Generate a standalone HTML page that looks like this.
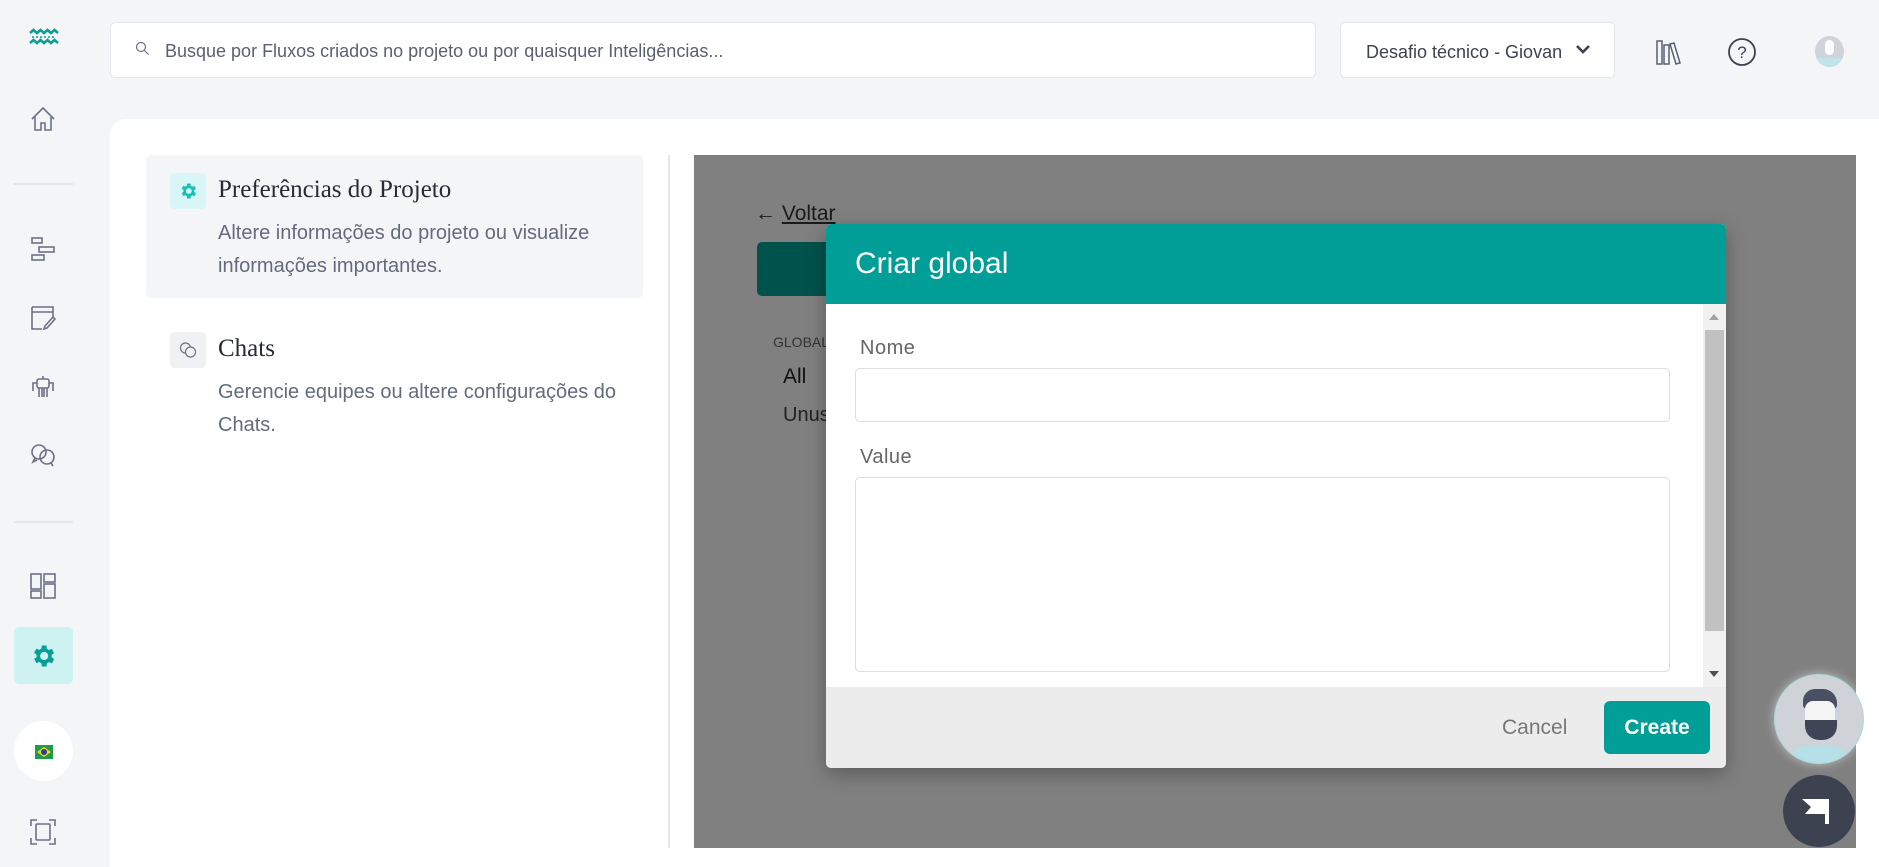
<!DOCTYPE html>
<html><head><meta charset="utf-8"><style>
*{box-sizing:border-box;margin:0;padding:0}
body{width:1879px;height:867px;overflow:hidden;background:#f4f5f7;font-family:"Liberation Sans",sans-serif;position:relative;color:#333}
.abs{position:absolute}
.ic{position:absolute;left:29px;width:28px;height:28px}
.ic svg{width:28px;height:28px;fill:none;stroke:#6b7285;stroke-width:1.6}
.sep{position:absolute;left:14px;width:59px;height:2px;background:#e3e6ea}
.lbl{font-family:"Liberation Sans",sans-serif;color:#666;font-size:20px;letter-spacing:.5px}
</style></head><body>
<!-- sidebar -->
<svg class="abs" style="left:29px;top:28px" width="30" height="18"><path d="M1 5l3.5-3 3.5 3 3.5-3 3.5 3 3.5-3 3.5 3 3.5-3 3.5 3M1 15l3.5-3 3.5 3 3.5-3 3.5 3 3.5-3 3.5 3 3.5-3 3.5 3" stroke="#0b9e93" stroke-width="2.6" fill="none"/><path d="M3 9h24" stroke="#0b9e93" stroke-width="1.5" stroke-dasharray="2 2" fill="none"/></svg>
<div class="ic" style="top:105px"><svg viewBox="0 0 28 28"><path d="M3 14L14 3l11 11M6 12v13h6v-7h4v7h6V12"/></svg></div>
<div class="sep" style="top:183px"></div>
<div class="ic" style="top:235px"><svg viewBox="0 0 28 28"><rect x="3" y="3" width="10" height="5"/><rect x="10" y="12" width="15" height="5"/><rect x="3" y="20" width="12" height="5"/></svg></div>
<div class="ic" style="top:304px"><svg viewBox="0 0 28 28"><path d="M3 3h21v10M3 8h21M3 3v22h10M15 25l3-1 8-9-2-2-8 9z"/></svg></div>
<div class="ic" style="top:373px"><svg viewBox="0 0 28 28"><rect x="8" y="6" width="12" height="9" rx="2"/><path d="M14 6V3M10 15v9M18 15v9M8 10H4v8M20 10h4v8M13 15v9M15 15v9"/></svg></div>
<div class="ic" style="top:441px"><svg viewBox="0 0 28 28"><circle cx="10" cy="11" r="7"/><circle cx="18" cy="16" r="7"/><path d="M6 17l-2 4 4-2M22 22l2 3"/></svg></div>
<div class="sep" style="top:521px"></div>
<div class="ic" style="top:572px"><svg viewBox="0 0 28 28"><rect x="2" y="2" width="10" height="15"/><rect x="15" y="2" width="11" height="8"/><rect x="2" y="19" width="10" height="7"/><rect x="15" y="12" width="11" height="14"/></svg></div>
<div class="abs" style="left:14px;top:627px;width:59px;height:57px;background:#cdf2f1;border-radius:5px"></div>
<svg class="abs" style="left:29px;top:642px" width="28" height="28" viewBox="0 0 24 24"><path fill="#07a096" d="M19.4 13a7.5 7.5 0 000-2l2.1-1.6-2-3.5-2.5 1a7 7 0 00-1.7-1L15 3h-4l-.4 2.7a7 7 0 00-1.7 1l-2.5-1-2 3.5L6.6 11a7.5 7.5 0 000 2l-2.2 1.6 2 3.5 2.5-1a7 7 0 001.7 1L11 21h4l.4-2.7a7 7 0 001.7-1l2.5 1 2-3.5zM13 15.5a3.5 3.5 0 110-7 3.5 3.5 0 010 7z"/></svg>
<div class="abs" style="left:14px;top:721px;width:59px;height:60px;background:#fff;border-radius:50%"></div>
<div class="abs" style="left:35px;top:745px;width:18px;height:14px;background:#1f9b4b"><div style="position:absolute;left:2px;top:2px;width:14px;height:10px;background:#f7d417;clip-path:polygon(50% 0,100% 50%,50% 100%,0 50%)"></div><div style="position:absolute;left:6px;top:4px;width:6px;height:6px;border-radius:50%;background:#2a3f96"></div></div>
<div class="ic" style="top:818px"><svg viewBox="0 0 28 28"><path d="M2 8V2h6M20 2h6v6M26 20v6h-6M8 26H2v-6"/><rect x="7" y="6" width="14" height="16" rx="1"/></svg></div>

<!-- top bar -->
<div class="abs" style="left:110px;top:22px;width:1206px;height:56px;background:#fff;border:1px solid #e3e6ea;border-radius:5px"></div>
<svg class="abs" style="left:135px;top:41px" width="16" height="16"><circle cx="6" cy="6" r="4.5" stroke="#6b7285" fill="none" stroke-width="1.2"/><path d="M9.5 9.5l4 4" stroke="#6b7285" stroke-width="1.2"/></svg>
<div class="abs" style="left:165px;top:41px;font-size:18px;color:#5a6072">Busque por Fluxos criados no projeto ou por quaisquer Inteligências...</div>
<div class="abs" style="left:1340px;top:22px;width:275px;height:56px;background:#fff;border:1px solid #e3e6ea;border-radius:5px"></div>
<div class="abs" style="left:1366px;top:42px;width:196px;overflow:hidden;white-space:nowrap;font-size:18px;color:#3c4250">Desafio técnico - Giovana</div>
<svg class="abs" style="left:1575px;top:44px" width="16" height="12"><path d="M2 2l6 6 6-6" stroke="#3c4250" stroke-width="2.6" fill="none"/></svg>
<svg class="abs" style="left:1655px;top:38px" width="28" height="28" viewBox="0 0 28 28" fill="none" stroke="#5a6072" stroke-width="1.5"><rect x="2" y="3" width="5" height="23"/><rect x="9" y="7" width="5" height="19"/><path d="M15 6l4-1 6 20-4 1z"/></svg>
<svg class="abs" style="left:1727px;top:37px" width="30" height="30" viewBox="0 0 30 30"><circle cx="15" cy="15" r="13" fill="none" stroke="#3c4250" stroke-width="1.8"/><text x="15" y="21" text-anchor="middle" font-family="Liberation Sans" font-size="17" fill="#3c4250">?</text></svg>
<div class="abs" style="left:1815px;top:36px;width:29px;height:31px;border-radius:50%;background:#cfd3da;overflow:hidden"><div style="position:absolute;left:10px;top:4px;width:9px;height:15px;background:#fff;border-radius:5px"></div><div style="position:absolute;left:3px;top:22px;width:23px;height:10px;background:#bfe4ea"></div></div>

<!-- main panel -->
<div class="abs" style="left:110px;top:119px;width:1769px;height:748px;background:#fff;border-top-left-radius:16px"></div>
<div class="abs" style="left:146px;top:155px;width:497px;height:143px;background:#f4f5f7;border-radius:5px"></div>
<div class="abs" style="left:170px;top:173px;width:36px;height:36px;background:#d8f6f5;border-radius:4px"></div>
<svg class="abs" style="left:178px;top:181px" width="20" height="20" viewBox="0 0 24 24"><path fill="#19c1b5" d="M19.4 13a7.5 7.5 0 000-2l2.1-1.6-2-3.5-2.5 1a7 7 0 00-1.7-1L15 3h-4l-.4 2.7a7 7 0 00-1.7 1l-2.5-1-2 3.5L6.6 11a7.5 7.5 0 000 2l-2.2 1.6 2 3.5 2.5-1a7 7 0 001.7 1L11 21h4l.4-2.7a7 7 0 001.7-1l2.5 1 2-3.5zM13 15.5a3.5 3.5 0 110-7 3.5 3.5 0 010 7z"/></svg>
<div class="abs" style="left:218px;top:176px;font-family:'Liberation Serif',serif;font-size:25px;color:#272b35">Preferências do Projeto</div>
<div class="abs" style="left:218px;top:217px;font-size:20px;line-height:33px;color:#646b7d;width:420px">Altere informações do projeto ou visualize informações importantes.</div>
<div class="abs" style="left:170px;top:332px;width:36px;height:36px;background:#f0f1f3;border-radius:4px"></div>
<svg class="abs" style="left:178px;top:340px" width="20" height="20" viewBox="0 0 20 20" fill="none" stroke="#6b7285" stroke-width="1.2"><circle cx="7.5" cy="8" r="5"/><circle cx="12.5" cy="12" r="5" fill="#f0f1f3"/></svg>
<div class="abs" style="left:218px;top:335px;font-family:'Liberation Serif',serif;font-size:25px;color:#272b35">Chats</div>
<div class="abs" style="left:218px;top:376px;font-size:20px;line-height:33px;color:#646b7d;width:420px">Gerencie equipes ou altere configurações do Chats.</div>
<div class="abs" style="left:668px;top:155px;width:2px;height:693px;background:#e3e6ea"></div>

<!-- overlay area -->
<div class="abs" style="left:694px;top:155px;width:1162px;height:693px;background:#808080"></div>
<div class="abs" style="left:755px;top:202px;font-size:21px;color:#1a1a1a">← <u>Voltar</u></div>
<div class="abs" style="left:757px;top:242px;width:80px;height:54px;background:#00524c;border-radius:5px"></div>
<div class="abs" style="left:773px;top:334px;font-size:14px;color:#333">GLOBAL</div>
<div class="abs" style="left:783px;top:365px;font-size:21px;color:#111">All</div>
<div class="abs" style="left:783px;top:404px;font-size:20px;color:#222">Unus</div>

<!-- modal -->
<div class="abs" style="left:826px;top:224px;width:900px;height:544px;background:#fff;border-radius:5px;overflow:hidden;box-shadow:0 6px 20px rgba(0,0,0,.3)">
 <div style="height:80px;background:#009e96;color:#fff;font-size:30px;padding:23px 0 0 29px">Criar global</div>
 <div class="abs" style="left:877px;top:80px;width:23px;height:383px;background:#f1f1f1"></div>
 <div class="abs" style="left:879px;top:106px;width:19px;height:301px;background:#c1c1c1"></div>
 <svg class="abs" style="left:882px;top:89px" width="12" height="8"><path d="M1 7l5-6 5 6z" fill="#a3a3a3"/></svg>
 <svg class="abs" style="left:882px;top:446px" width="12" height="8"><path d="M1 1l5 6 5-6z" fill="#505050"/></svg>
 <div class="abs lbl" style="left:34px;top:113px">Nome</div>
 <div class="abs" style="left:29px;top:144px;width:815px;height:54px;border:1px solid #ddd;border-radius:5px"></div>
 <div class="abs lbl" style="left:34px;top:222px">Value</div>
 <div class="abs" style="left:29px;top:253px;width:815px;height:195px;border:1px solid #ddd;border-radius:5px"></div>
 <div class="abs" style="left:0;top:463px;width:900px;height:81px;background:#ececec"></div>
 <div class="abs" style="left:676px;top:492px;font-size:21px;color:#777">Cancel</div>
 <div class="abs" style="left:778px;top:477px;width:106px;height:53px;background:#009e96;border-radius:6px;color:#fff;font-size:21px;font-weight:bold;text-align:center;line-height:53px">Create</div>
</div>

<!-- floating -->
<div class="abs" style="left:1774px;top:674px;width:90px;height:90px;border-radius:50%;background:#cfd3d8;border:1px solid #a8dbdf;overflow:hidden;box-shadow:0 0 10px rgba(255,255,255,.5)">
 <div style="position:absolute;left:28px;top:14px;width:34px;height:20px;background:#4a5063;border-radius:12px 14px 4px 4px"></div>
 <div style="position:absolute;left:30px;top:26px;width:30px;height:34px;background:#f5f5f5;border-radius:8px"></div>
 <div style="position:absolute;left:30px;top:45px;width:32px;height:20px;background:#3f4556;border-radius:0 0 14px 14px"></div>
 <div style="position:absolute;left:14px;top:70px;width:60px;height:30px;background:#b6dfe8;border-radius:20px 20px 0 0"></div>
</div>
<div class="abs" style="left:1783px;top:775px;width:72px;height:72px;border-radius:50%;background:#3c4250"></div>
<svg class="abs" style="left:1799px;top:792px" width="40" height="40" viewBox="0 0 40 40"><path d="M3 7h27v25h-4V22H6l6-7z" fill="#fff"/></svg>
</body></html>
